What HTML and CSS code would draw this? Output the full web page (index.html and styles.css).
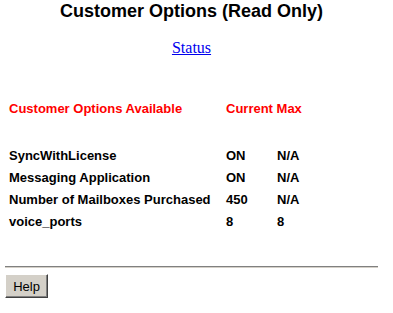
FILE: index.html
```html
<!DOCTYPE html>
<html lang="en">
<head>
    <meta charset="UTF-8">
    <title>Customer Options (Read Only)</title>
    <link rel="stylesheet" href="styles.css">
</head>
<body>
    <h1 class="title">Customer Options (Read Only)</h1>
    <div class="nav"><a href="#">Status</a></div>

    <table class="options">
        <thead>
            <tr>
                <th class="col-name">Customer Options Available</th>
                <th colspan="2">Current Max</th>
            </tr>
        </thead>
        <tbody>
            <tr class="spacer"><td colspan="3"></td></tr>
            <tr><td>SyncWithLicense</td><td>ON</td><td>N/A</td></tr>
            <tr><td>Messaging Application</td><td>ON</td><td>N/A</td></tr>
            <tr><td>Number of Mailboxes Purchased</td><td>450</td><td>N/A</td></tr>
            <tr><td>voice_ports</td><td>8</td><td>8</td></tr>
        </tbody>
    </table>

    <hr class="rule">
    <button class="help-btn">Help</button>
</body>
</html>
```

FILE: styles.css
```css
body {
    margin: 0;
    padding: 0 5px;
    background: #fff;
    color: #000;
    font-family: "Liberation Sans", Arial, sans-serif;
}
.title {
    margin: 0 0 0 -5px;
    font-size: 18px;
    line-height: 22px;
    text-align: center;
    width: 383px;
}
.nav {
    margin: 16px 0 0 -5px;
    text-align: center;
    width: 383px;
    font-family: "Liberation Serif", "Times New Roman", serif;
    font-size: 16px;
    line-height: 20px;
}
.nav a {
    color: #0000ee;
}
.options {
    margin-top: 40px;
    border-collapse: collapse;
    font-size: 13px;
    font-weight: bold;
}
.options th {
    color: #ff0000;
    text-align: left;
    padding: 0 0 0 4px;
    height: 22px;
    line-height: 22px;
}
.options td {
    padding: 0 0 0 4px;
    height: 22px;
    line-height: 22px;
}
.options .col-name {
    width: 213px;
}
.options td:nth-child(2) {
    width: 47px;
}
.options .spacer td {
    height: 25px;
    line-height: 25px;
}
.rule {
    margin: 33px 0 0;
    width: 373px;
    border: none;
    border-top: 1px solid #808080;
    border-bottom: 1px solid #d4d0c8;
    height: 0;
}
.help-btn {
    margin-top: 6px;
    width: 43px;
    height: 24px;
    padding: 0;
    font-family: "Liberation Sans", Arial, sans-serif;
    font-size: 13px;
    background: #d4d0c8;
    border: 1px solid;
    border-color: #fff #404040 #404040 #fff;
    box-shadow: inset -1px -1px 0 #808080;
    color: #000;
}
```
